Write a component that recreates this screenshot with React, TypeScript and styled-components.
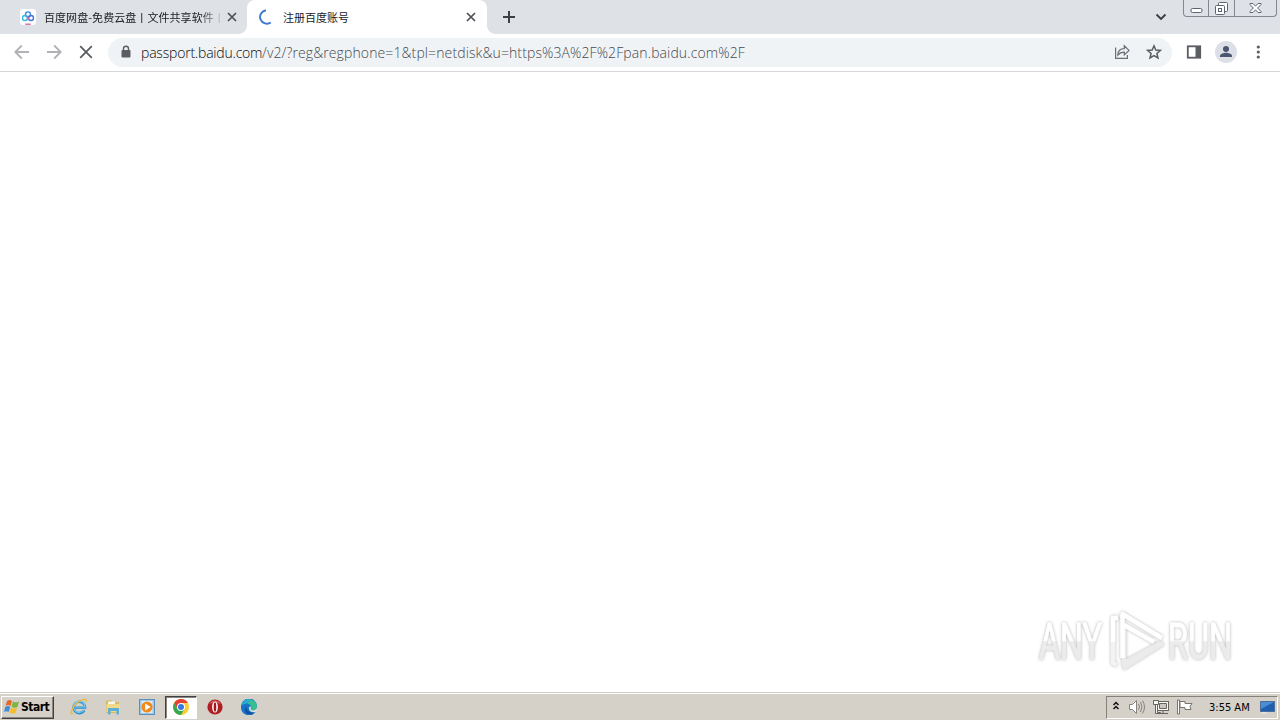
import React from 'react';
import styled, { createGlobalStyle } from 'styled-components';

const Global = createGlobalStyle`
  * { box-sizing: border-box; }
  body { margin: 0; background: #fff; overflow: hidden; }
`;

const Desktop = styled.div`
  width: 1280px;
  height: 720px;
  display: flex;
  flex-direction: column;
  background: #fff;
  font-family: "Noto Sans", "Noto Sans CJK SC", sans-serif;
  svg { display: block; flex: none; }
`;

const TabStrip = styled.header`
  height: 34px;
  display: flex;
  background: #dee1e6;
`;

const Tab = styled.div<{ $active?: boolean }>`
  position: relative;
  width: ${p => (p.$active ? 240 : 247)}px;
  height: 34px;
  display: flex;
  align-items: center;
  padding-left: ${p => (p.$active ? 11 : 20)}px;
  padding-right: ${p => (p.$active ? 11 : 10)}px;
  background: ${p => (p.$active ? '#fff' : 'transparent')};
  border-radius: 8px 8px 0 0;
  &::before, &::after {
    content: "";
    display: ${p => (p.$active ? 'block' : 'none')};
    position: absolute;
    bottom: 0;
    width: 8px;
    height: 8px;
  }
  &::before { left: -8px; background: radial-gradient(circle at 0 0, transparent 7.5px, #fff 8px); }
  &::after { right: -8px; background: radial-gradient(circle at 100% 0, transparent 7.5px, #fff 8px); }
`;

const TabTitle = styled.div<{ $fade?: boolean }>`
  flex: 1;
  margin-left: ${p => (p.$fade ? 8 : 9)}px;
  white-space: nowrap;
  font: 11px/18px "Noto Sans CJK SC", sans-serif;
  letter-spacing: ${p => (p.$fade ? 0.06 : 0)}px;
  color: #202124;
  ${p => p.$fade && 'mask-image: linear-gradient(to right, #000 155px, transparent 181px);'}
`;

const Favicon = styled.div`
  width: 16px;
  height: 16px;
  border-radius: 3px;
  background: #fff;
`;

const NewTab = styled.div`
  margin: 10px 0 0 15px;
`;

const TabSearch = styled.div`
  margin: 12px 16px 0 auto;
`;

const WindowButtons = styled.div`
  width: 94px;
  height: 17px;
  margin-right: 3px;
  display: flex;
  border: 1px solid #84878d;
  border-top: 0;
  border-radius: 0 0 4px 4px;
`;

const WindowButton = styled.div<{ $width: number }>`
  width: ${p => p.$width}px;
  display: flex;
  align-items: center;
  justify-content: center;
  & + & { border-left: 1px solid #84878d; }
`;

const Toolbar = styled.div`
  height: 38px;
  display: flex;
  align-items: center;
  padding: 0 12px;
  border-bottom: 1px solid #d5d7da;
  svg { margin-top: -1px; }
`;

const NavIcons = styled.div`
  display: flex;
  gap: 12px;
  width: 96px;
`;

const AddressBar = styled.div`
  width: 1064px;
  height: 29px;
  display: flex;
  align-items: center;
  padding: 0 8px 0 12px;
  border-radius: 15px;
  background: #f0f3f5;
`;

const Address = styled.div`
  flex: 1;
  display: flex;
  margin-left: 9px;
  font: 300 14px/20px "Open Sans", "Noto Sans", sans-serif;
  white-space: pre;
`;

const Host = styled.span`
  width: 121px;
  letter-spacing: -0.2px;
  color: #08090a;
`;

const Path = styled.span`
  color: #45494e;
  letter-spacing: 0.11px;
`;

const AddressActions = styled.div`
  display: flex;
  gap: 12px;
`;

const ToolbarActions = styled.div`
  display: flex;
  align-items: center;
  gap: 11px;
  margin-left: 12px;
`;

const Page = styled.main`
  flex: 1;
  display: flex;
  align-items: flex-end;
  justify-content: flex-end;
  padding: 0 36px 12px 0;
`;

const Taskbar = styled.footer`
  height: 28px;
  display: flex;
  align-items: center;
  padding: 1px 2px 0 1px;
  background: #d5d1c9;
  border-top: 1px solid #d0ccc4;
  box-shadow: inset 0 1px #fff;
`;

const StartButton = styled.div`
  width: 53px;
  height: 23px;
  display: flex;
  align-items: center;
  gap: 1px;
  padding-left: 2px;
  border: 1px solid;
  border-color: #fff #404040 #404040 #fff;
  box-shadow: inset -1px -1px #89867f;
  font: bold 12px/20px "DejaVu Sans Condensed", "DejaVu Sans", sans-serif;
  letter-spacing: -0.5px;
  color: #000;
`;

const Launcher = styled.div`
  display: flex;
  gap: 2px;
  margin-left: 9px;
`;

const LaunchItem = styled.div<{ $active?: boolean }>`
  width: 32px;
  height: 23px;
  display: flex;
  align-items: center;
  justify-content: center;
  background: ${p => (p.$active ? '#fff' : 'transparent')};
  border: 1px solid transparent;
  border-color: ${p => (p.$active ? '#404040 #fff #fff #404040' : 'transparent')};
  box-shadow: ${p => (p.$active ? 'inset 1px 1px #89867f' : 'none')};
`;

const Tray = styled.div`
  width: 172px;
  height: 23px;
  margin-left: auto;
  display: flex;
  align-items: center;
  padding-left: 5px;
  border: 1px solid;
  border-color: #85827b #fff #fff #85827b;
`;

const TrayIcons = styled.div`
  display: flex;
  align-items: center;
  gap: 8px;
`;

const Clock = styled.div`
  width: 50px;
  margin-left: 16px;
  padding-top: 1px;
  font: 11px/20px "DejaVu Sans Condensed", "DejaVu Sans", sans-serif;
  letter-spacing: 0;
  white-space: nowrap;
  color: #000;
`;

const Cross = () => (
  <svg width="10" height="10" viewBox="0 0 10 10">
    <path d="M1 1l8 8M9 1L1 9" stroke="#4c4f54" strokeWidth="1.7" />
  </svg>
);

const NetdiskIcon = () => (
  <svg width="16" height="16" viewBox="0 0 16 16" fill="none">
    <circle cx="8" cy="5.4" r="2.5" stroke="#3f87de" strokeWidth="1.4" />
    <circle cx="5" cy="9" r="2.5" stroke="#35bad9" strokeWidth="1.4" />
    <circle cx="11" cy="9" r="2.5" stroke="#4576d8" strokeWidth="1.4" />
    <path d="M7 7.6l2.3 2.8" stroke="#d96d99" strokeWidth="1.5" />
    <path d="M5.3 15.2h5.4" stroke="#d05d9d" strokeWidth="1.3" />
  </svg>
);

const Arrow = ({ flip }: { flip?: boolean }) => (
  <svg width="20" height="20" viewBox="0 0 20 20">
    <path d={flip ? 'M3 10h13M10.2 3.5l6.5 6.5-6.5 6.5' : 'M17 10H4M9.8 3.5L3.3 10l6.5 6.5'} fill="none" stroke="#b0b2b5" strokeWidth="1.8" />
  </svg>
);

const Orb = () => (
  <svg width="16" height="16" viewBox="0 0 16 16">
    <path d="M3 2q3-2 5 0L6.5 7Q4 5 1.5 7z" fill="#e66826" />
    <path d="M9 2.6q3 1.6 6 0L13.5 8q-3 1.6-6-.5z" fill="#7fb441" />
    <path d="M1.2 8q3-1.8 5 0l-1.5 5q-2-1.6-4.7 0z" fill="#3f8cd7" />
    <path d="M7 8.6q3 1.6 6 .2l-1.5 5.3q-3 1.4-6-.5z" fill="#f4bd2d" />
  </svg>
);

const ExplorerIcon = () => (
  <svg width="18" height="18" viewBox="0 0 18 18" fill="none">
    <path d="M14.3 12.2A5.7 5.7 0 1 1 15 9.5H5" stroke="#2f8fd0" strokeWidth="2.6" />
    <path d="M14 12A5.7 5.7 0 1 1 15 9H5" stroke="#7fd0f2" strokeWidth="1.2" />
    <path d="M3 15C-.5 18 1 11 6 6S18-.4 16 4" stroke="#e8b73d" strokeWidth="1.3" />
  </svg>
);

const FolderIcon = () => (
  <svg width="16" height="16" viewBox="0 0 16 16">
    <path d="M1 2l5-1 1 2h7v11H1z" fill="#d9ba63" />
    <path d="M3 2.5h7v4H3z" fill="#f6f7e9" />
    <path d="M1.500 5H15v8H1.500z" fill="#f0da8a" />
    <path d="M3 15.5V9h11v6.5h-2.500V12h-6v3.500z" fill="#5eafd8" />
  </svg>
);

const PlayerIcon = () => (
  <svg width="16" height="16" viewBox="0 0 16 16">
    <rect x=".5" y=".5" width="15" height="15" fill="#9dc8ea" stroke="#5d8fbc" />
    <rect x="2.5" y="2" width="11" height="12" fill="#dceefa" />
    <circle cx="8" cy="8" r="5.6" fill="#f08a1b" />
    <path d="M6.2 4.6l5.4 3.400-5.400 3.400z" fill="#fff" />
  </svg>
);

const ChromeIcon = () => (
  <svg width="16" height="16" viewBox="0 0 16 16">
    <circle cx="8" cy="8" r="8" fill="#fc3" />
    <path d="M8 8V4h7A8 8 0 0 0 1.1 4L4.5 10z" fill="#e64135" />
    <path d="M1.1 4A8 8 0 0 0 8 16l3.4-6H8L4.5 10z" fill="#35a852" />
    <circle cx="8" cy="8" r="4" fill="#fff" />
    <circle cx="8" cy="8" r="3" fill="#3978df" />
  </svg>
);

const OperaIcon = () => (
  <svg width="16" height="16" viewBox="0 0 16 16">
    <circle cx="8" cy="8" r="7.6" fill="#b01d22" />
    <path d="M2 5a7 7 0 0 1 12 0q-6-3-12 0" fill="#cf5c5c" />
    <ellipse cx="8" cy="8" rx="2.9" ry="5.6" fill="#fff" />
    <ellipse cx="8" cy="8" rx="1.3" ry="4.7" fill="#a7161b" />
  </svg>
);

const EdgeIcon = () => (
  <svg width="16" height="16" viewBox="0 0 16 16">
    <path d="M0 8a8 8 0 0 1 16-1c0 3-2 4-4 4l2.500 2A8 8 0 0 1 0 8z" fill="#1674c6" />
    <path d="M.4 6A8 8 0 0 1 16 7c0 4-5 5-6 3 2-4-5-8-9.600-4z" fill="#38bf91" />
    <path d="M.4 6A8 8 0 0 1 10 .5Q8 4 .4 6" fill="#24acd8" />
    <path d="M5.5 7.500C5 12 10 15 14 13c-3 3-8 3-9.500 0-1-2-.5-4 1-5.500" fill="#134f9d" />
    <path d="M8 8.500C8.500 7 10 7.500 10 8.700c0 1-.5 1 0 1.700 1.700 1.700 4 1 6 .2l-1.500 2.400C11 14 7.400 12 8 8.500" fill="#dce0dc" />
  </svg>
);

const Watermark = () => (
  <svg width="212" height="72" viewBox="0 0 212 72">
    <defs>
      <filter id="halo" x="-10%" y="-20%" width="120%" height="140%">
        <feDropShadow dx="0" dy="0" stdDeviation="1.8" floodColor="#858585" floodOpacity=".68" />
      </filter>
      <linearGradient id="mark" x1="0" y1="13" x2="0" y2="55" gradientUnits="userSpaceOnUse">
        <stop offset=".46" stopColor="#fff" />
        <stop offset=".5" stopColor="#ececec" />
        <stop offset="1" stopColor="#ebebeb" />
      </linearGradient>
    </defs>
    <g filter="url(#halo)" fill="url(#mark)" stroke="url(#mark)" strokeWidth="1" fontFamily="Roboto, sans-serif" fontSize="50">
      <text x="0" y="51" transform="translate(7 0) scale(.645 1)">ANY</text>
      <text x="0" y="51" transform="translate(136 0) scale(.65 1)">RUN</text>
    </g>
    <g filter="url(#halo)" fill="none" strokeWidth="4.5" strokeLinejoin="round">
      <path d="M86 10h-5v45l4 2" stroke="#f3f3f3" />
      <path d="M81 34V10h5" stroke="#fff" />
      <path d="M129 35L92 55V18" stroke="#ebebeb" />
      <path d="M90.500 50V6L130 30" stroke="#fff" />
      <path d="M92 17l30 17" stroke="#fff" />
      <path d="M131 35L91 60" stroke="#ebebeb" />
    </g>
  </svg>
);

export default function App() {
  return (
    <Desktop>
      <Global />
      <TabStrip>
        <Tab>
          <Favicon><NetdiskIcon /></Favicon>
          <TabTitle $fade>百度网盘-免费云盘丨文件共享软件丨</TabTitle>
          <Cross />
        </Tab>
        <Tab $active>
          <svg width="16" height="16" viewBox="0 0 16 16"><path d="M8 1.2A6.8 6.8 0 1 0 12.8 13.5" fill="none" stroke="#3e78d4" strokeWidth="1.9" /></svg>
          <TabTitle>注册百度账号</TabTitle>
          <Cross />
        </Tab>
        <NewTab><svg width="14" height="14" viewBox="0 0 14 14"><path d="M7 1v12M1 7h12" stroke="#3c4043" strokeWidth="2" /></svg></NewTab>
        <TabSearch><svg width="12" height="10" viewBox="0 0 12 10"><path d="M1.5 2.5L6 7l4.5-4.5" fill="none" stroke="#3c4043" strokeWidth="1.9" /></svg></TabSearch>
        <WindowButtons>
          <WindowButton $width={24}>
            <svg width="13" height="17"><rect x="1" y="8.5" width="11" height="4" rx="1.5" fill="#fff" stroke="#5d6370" /></svg>
          </WindowButton>
          <WindowButton $width={26}>
            <svg width="15" height="17" fill="#fff" stroke="#5d6370"><rect x="4.5" y="2.5" width="9" height="9" rx="1" /><rect x="1.5" y="5.5" width="9" height="9" rx="1" /><rect x="4.500" y="8.500" width="3" height="3" /></svg>
          </WindowButton>
          <WindowButton $width={42}>
            <svg width="13" height="17"><path d="M1 3.5h3l2.5 2.7L9 3.5h3v1L8.6 8l3.400 3.500v1H9L6.500 9.800 4 12.500H1v-1L4.400 8 1 4.500z" fill="#fff" stroke="#5d6370" /></svg>
          </WindowButton>
        </WindowButtons>
      </TabStrip>

      <Toolbar>
        <NavIcons>
          <Arrow />
          <Arrow flip />
          <svg width="20" height="20" viewBox="0 0 20 20"><path d="M4.2 4.2l11.6 11.6M15.8 4.2L4.2 15.8" stroke="#5a5d61" strokeWidth="1.8" /></svg>
        </NavIcons>
        <AddressBar>
          <svg width="12" height="14" viewBox="0 0 12 14"><rect x="1.5" y="5" width="9" height="7.5" rx="1" fill="#5a5d61" /><path d="M3.5 6V3.7a2.5 2.5 0 0 1 5 0V6" fill="none" stroke="#5a5d61" strokeWidth="1.4" /></svg>
          <Address>
            <Host>passport.baidu.com</Host>
            <Path>/v2/?reg&amp;regphone=1&amp;tpl=netdisk&amp;u=https%3A%2F%2Fpan.baidu.com%2F</Path>
          </Address>
          <AddressActions>
            <svg width="20" height="20" viewBox="0 0 20 20" fill="none" stroke="#6b6e73" strokeWidth="1.2"><path d="M3.6 5.5v10.8h11.800V13" /><path d="M5.800 13c.2-4.500 2.800-6.400 6.500-6.400V3.800l4.700 4.600-4.700 4.500v-2.800c-2.800 0-4.800.8-6.500 2.900z" /></svg>
            <svg width="20" height="20" viewBox="0 0 20 20"><path d="M10 3.800l1.800 4.200 4.600.4-3.500 3 1.100 4.600-4-2.400L6 16l1.100-4.600-3.500-3 4.600-.4z" fill="none" stroke="#5a5d61" strokeWidth="1.5" /></svg>
          </AddressActions>
        </AddressBar>
        <ToolbarActions>
          <svg width="20" height="20" viewBox="0 0 20 20"><rect x="3.8" y="4.3" width="12.4" height="11.4" fill="#fff" stroke="#5a5d61" strokeWidth="1.8" /><path d="M11.5 4h5v12h-5z" fill="#5a5d61" /></svg>
          <svg width="22" height="22" viewBox="0 0 22 22"><circle cx="11" cy="11" r="11" fill="#dce0e6" /><circle cx="11" cy="8" r="3" fill="#4b5570" /><path d="M5 16v-1.300c0-2 4-3 6-3s6 1 6 3V16z" fill="#4b5570" /></svg>
          <svg width="20" height="20" viewBox="0 0 20 20" fill="#5a5d61"><circle cx="10.3" cy="5" r="1.6" /><circle cx="10.3" cy="10" r="1.6" /><circle cx="10.3" cy="15" r="1.6" /></svg>
        </ToolbarActions>
      </Toolbar>

      <Page><Watermark /></Page>

      <Taskbar>
        <StartButton><Orb />Start</StartButton>
        <Launcher>
          <LaunchItem><ExplorerIcon /></LaunchItem>
          <LaunchItem><FolderIcon /></LaunchItem>
          <LaunchItem><PlayerIcon /></LaunchItem>
          <LaunchItem $active><ChromeIcon /></LaunchItem>
          <LaunchItem><OperaIcon /></LaunchItem>
          <LaunchItem><EdgeIcon /></LaunchItem>
        </Launcher>
        <Tray>
          <TrayIcons>
            <svg width="8" height="12" viewBox="0 0 8 12"><path d="M1.5 4L4 1.5 6.5 4M1.5 8L4 5.5 6.5 8" fill="none" stroke="#111" strokeWidth="1.5" /></svg>
            <svg width="17" height="16" viewBox="0 0 17 16" stroke="#85837d"><path d="M1.5 5.5h3l4-4v13l-4-4h-3z" fill="#fff" /><path d="M10.5 5q2 3 0 6M12.5 3q3 5 0 10M14.5 1.5q4 6.5 0 13" fill="none" /></svg>
            <svg width="16" height="16" viewBox="0 0 16 16" fill="#f7f7f3" stroke="#66645f"><rect x="4.5" y="2.5" width="11" height="9" /><path d="M6.5 4.5h7v5h-7z" fill="#c8c7c2" /><path d="M7 14.5h8M10 12v2" /><path d="M.5 1.5h5v4h-5zM2.500 5.500h2v8h3v1h-5z" /></svg>
            <svg width="16" height="16" viewBox="0 0 16 16" fill="#fff" stroke="#77756f"><path d="M.5 1h2v14h-2z" /><path d="M3 2.5h5v2h7l-2 3 1 3H8v-2H3z" /></svg>
          </TrayIcons>
          <Clock>3:55 AM</Clock>
          <svg width="17" height="16" viewBox="0 0 17 16"><path d="M1.5 2.5h14v10h-14z" fill="#1e5faf" stroke="#4b6e98" /><path d="M2 3h13L2 10z" fill="#4b8dd4" /><path d="M2 14h6" stroke="#e8eef4" /></svg>
        </Tray>
      </Taskbar>
    </Desktop>
  );
}
